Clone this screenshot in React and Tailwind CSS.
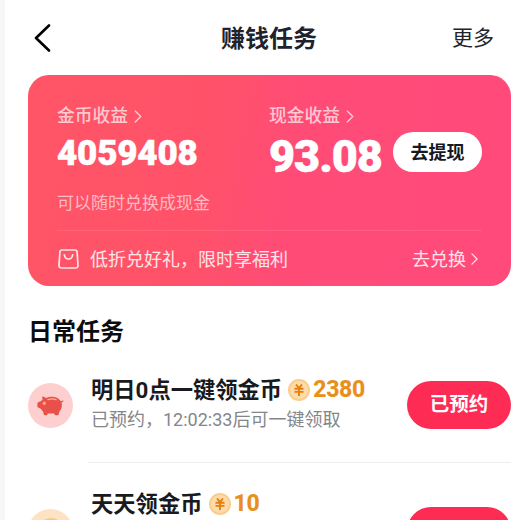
import React from 'react';

const tasks = [
  {
    id: 'reserve',
    title: '明日0点一键领金币',
    coins: '2380',
    desc: '已预约，12:02:33后可一键领取',
    action: '已预约',
    icon: 'piggy',
    height: 'h-[115px]',
  },
  {
    id: 'daily',
    title: '天天领金币',
    coins: '10',
    icon: 'coin',
    height: 'h-[136px]',
  },
];

const Chevron = ({ className }) => (
  <svg className={className} viewBox="0 0 8 14" fill="none" stroke="currentColor" strokeWidth="1.4" strokeLinecap="round" strokeLinejoin="round">
    <path d="M1 1l6 6-6 6" />
  </svg>
);

const BagIcon = () => (
  <svg className="ml-px h-5 w-[21px] shrink-0" viewBox="0 0 21 20" fill="none" stroke="currentColor" strokeWidth="1.7" strokeLinecap="round" strokeLinejoin="round">
    <path d="M4 1h13q1.900 0 2.100 2l.9 13q.1 3-2.600 3H3.600Q.9 19 1 16L1.900 3Q2.100 1 4 1z" />
    <path d="M6.300 5.800c.5 2.400 2.200 4.200 4.200 4.200s3.700-1.800 4.200-4.200" />
  </svg>
);

const PiggyIcon = () => (
  <svg className="h-[20px] w-[27px]" viewBox="0 0 27 20">
    <path
      fill="#e9504a"
      d="M5.200.7c.4-.4 1-.2 1.500.1l2.200 1.300C10.800 1 13 .7 15.200.7c3.500 0 6.100 1.300 7.900 3.700 1 .7 2 .6 2.900.1.500-.1.700.4.400.8-.5.700-1.200 1.100-1.900 1.300.4 1.200.5 2.500.3 3.900-.3 2-1.100 3.500-2.300 4.900l-.8 3c-.1.500-.4.800-.9.800h-2.300c-.5 0-.8-.3-.9-.8l-.3-1H10.800l-.4 1c-.2.500-.5.800-1 .8H7.700c-.5 0-.8-.3-.9-.8l-.6-2.700c-1-.8-1.800-1.800-2.400-2.900L1.200 11.600c-.5-.2-.8-.6-.8-1.100V7.500c0-.6.300-1 .8-1.200l2.900-1.400c.4-.5.900-1 1.400-1.400z"
    />
    <path d="M11 3.600c2.500-.9 5.500-.9 8 .1" fill="none" stroke="#f9b98a" strokeWidth="1.3" strokeLinecap="round" />
    <circle cx="7.300" cy="7.300" r="1.700" fill="#fba77b" />
  </svg>
);

const Coin = () => (
  <span className="flex h-[22px] w-[22px] shrink-0 items-center justify-center rounded-full border-2 border-[#fbcd8c] bg-[#fddcaa]">
    <svg className="h-[12px] w-[10px]" viewBox="0 0 10 12" fill="none" stroke="#e57f0c" strokeWidth="1.9">
      <path d="M2 .5L5 4.200 8 .5M.5 4.700h9M.5 7.900h9M5 4v8" />
    </svg>
  </span>
);

const TaskIcon = ({ type }) =>
  type === 'piggy' ? (
    <div className="flex h-[45px] w-[45px] shrink-0 items-center justify-center rounded-full bg-[#fdd0cf]">
      <PiggyIcon />
    </div>
  ) : (
    <div className="flex h-[45px] w-[45px] shrink-0 items-center justify-center rounded-full bg-[#fde2c4]">
      <div className="h-[26px] w-[26px] rounded-full bg-[#f9c78a]" />
    </div>
  );

const Header = () => (
  <header className="grid h-[75px] grid-cols-3 items-center pr-[17px] pl-[6px]">
    <button type="button" aria-label="返回" className="justify-self-start text-black">
      <svg className="h-[28px] w-[17px]" viewBox="0 0 17 28" fill="none" stroke="currentColor" strokeWidth="2.600" strokeLinecap="round" strokeLinejoin="round">
        <path d="M15 1.500L2 14l13 12.500" />
      </svg>
    </button>
    <h1 className="ml-[10px] justify-self-center pt-0.5 text-[24px] leading-none font-bold whitespace-nowrap text-[#20222c]">赚钱任务</h1>
    <span className="justify-self-end pt-0.5 text-[21px] leading-none text-[#22242c]">更多</span>
  </header>
);

const EarningsCard = () => (
  <section className="flex h-[211px] flex-col rounded-[21px] bg-[linear-gradient(100deg,#ff5566_0%,#ff5269_36%,#ff4c76_54%,#ff4a7c_100%)] px-[29px] text-white">
    <div className="flex h-[155px] pt-[31px]">
      <div className="w-[214px]">
        <div className="flex items-center gap-[6px] text-[17.800px] leading-5 font-medium text-white/70">
          金币收益
          <Chevron className="h-[13px] w-[8px]" />
        </div>
        <div className="mt-[10px] font-[Roboto] text-[35px] leading-[36px] font-black tracking-[-0.2px] [-webkit-text-stroke:0.500px_white]">4059408</div>
        <div className="mt-[21px] text-[17px] leading-5 text-white/60">可以随时兑换成现金</div>
      </div>
      <div>
        <div className="flex items-center gap-[6px] text-[17.800px] leading-5 font-medium text-white/70">
          现金收益
          <Chevron className="h-[13px] w-[8px]" />
        </div>
        <div className="mt-[6px] flex items-start">
          <span className="mt-[2px] w-[124px] font-[Roboto] text-[45px] leading-[46px] font-black tracking-[-1px] [-webkit-text-stroke:0.500px_white]">93.08</span>
          <button type="button" className="flex h-10 w-[89px] items-center justify-center rounded-full bg-white pt-px text-[18px] leading-none font-bold text-[#16171f]">
            去提现
          </button>
        </div>
      </div>
    </div>
    <div className="flex h-[56px] items-center border-t border-white/10 pt-px text-[18px] leading-none text-white/85">
      <BagIcon />
      <span className="ml-[11px] pt-px">低折兑好礼，限时享福利</span>
      <span className="ml-auto pt-px">去兑换</span>
      <Chevron className="mr-[4px] ml-[5px] h-3 w-[7px]" />
    </div>
  </section>
);

const TaskRow = ({ task, last }) => (
  <li className={`flex ${task.height}`}>
    <div className="flex w-[60px] shrink-0 items-center">
      <TaskIcon type={task.icon} />
    </div>
    <div className={`flex flex-1 items-center pl-[3px] ${last ? '' : 'border-b border-[#ededee]'}`}>
      <div className={`flex-1 self-start ${last ? 'pt-[27px]' : 'pt-[28px]'}`}>
        <div className="flex items-center">
          <span className="text-[22.300px] leading-[28px] font-bold whitespace-nowrap text-[#191a20]">{task.title}</span>
          <span className="ml-[6px] flex items-center gap-[3px]">
            <Coin />
            <span className="font-[Roboto] text-[23px] leading-[28px] font-extrabold tracking-[-0.3px] text-[#e8901b]">{task.coins}</span>
          </span>
        </div>
        {task.desc && <p className="mt-[6px] text-[18px] leading-5 whitespace-nowrap text-[#85868a]">{task.desc}</p>}
      </div>
      <button type="button" className="flex h-12 w-[104px] shrink-0 items-center justify-center rounded-full bg-[#fe2b54] text-[19.500px] leading-none font-bold text-white">
        {task.action}
      </button>
    </div>
  </li>
);

export default function App() {
  return (
    <div className="h-[520px] overflow-hidden border-l-[5px] border-[#f7f7f7] bg-white pr-3 pl-[23px] font-[Roboto,'Noto_Sans_CJK_SC',sans-serif]">
      <Header />
      <EarningsCard />
      <h2 className="mt-[34px] text-[24px] leading-6 font-bold text-[#0c0c0e]">日常任务</h2>
      <ul className="mt-[4px]">
        {tasks.map((task, index) => (
          <TaskRow key={task.id} task={task} last={index === tasks.length - 1} />
        ))}
      </ul>
    </div>
  );
}
